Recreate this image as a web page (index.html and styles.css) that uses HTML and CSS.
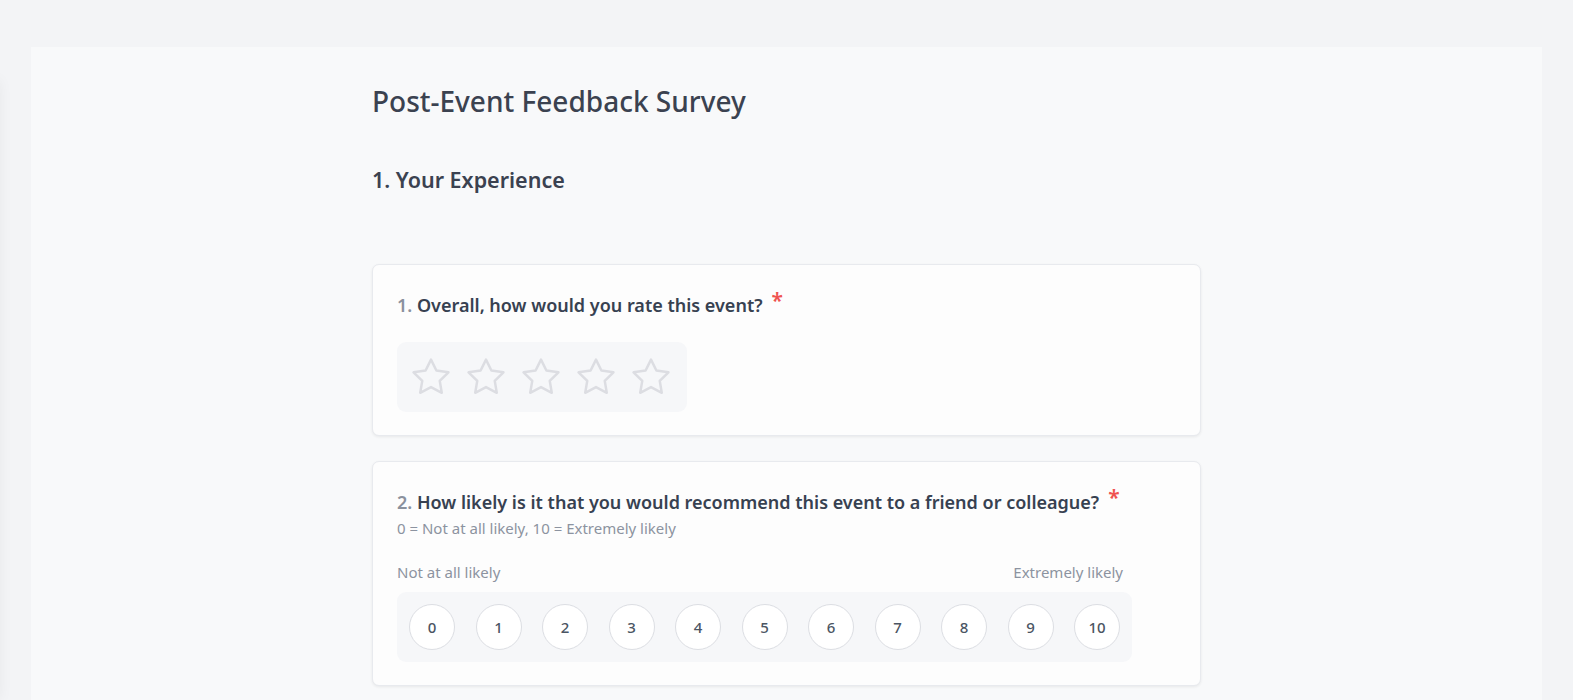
FILE: index.html
```html
<!DOCTYPE html>
<html lang="en">
<head>
<meta charset="utf-8">
<title>Post-Event Feedback Survey</title>
<link rel="stylesheet" href="styles.css">
</head>
<body>
<div class="edge-shadow"></div>
<div class="app">
  <main class="panel">
    <div class="column">
      <h1 class="survey-title">Post-Event Feedback Survey</h1>
      <h2 class="section-title">1. Your Experience</h2>

      <section class="card">
        <div class="question">
          <span class="q-num">1.</span> Overall, how would you rate this event?<span class="req">*</span>
        </div>
        <div class="stars">
          <svg class="star" viewBox="0 0 24 24"><path d="M12 2.5l2.94 5.96 6.58.96-4.76 4.64 1.12 6.55L12 17.52l-5.88 3.09 1.12-6.55-4.76-4.64 6.58-.96z"/></svg>
          <svg class="star" viewBox="0 0 24 24"><path d="M12 2.5l2.94 5.96 6.58.96-4.76 4.64 1.12 6.55L12 17.52l-5.88 3.09 1.12-6.55-4.76-4.64 6.58-.96z"/></svg>
          <svg class="star" viewBox="0 0 24 24"><path d="M12 2.5l2.94 5.96 6.58.96-4.76 4.64 1.12 6.55L12 17.52l-5.88 3.09 1.12-6.55-4.76-4.64 6.58-.96z"/></svg>
          <svg class="star" viewBox="0 0 24 24"><path d="M12 2.5l2.94 5.96 6.58.96-4.76 4.64 1.12 6.55L12 17.52l-5.88 3.09 1.12-6.55-4.76-4.64 6.58-.96z"/></svg>
          <svg class="star" viewBox="0 0 24 24"><path d="M12 2.5l2.94 5.96 6.58.96-4.76 4.64 1.12 6.55L12 17.52l-5.88 3.09 1.12-6.55-4.76-4.64 6.58-.96z"/></svg>
        </div>
      </section>

      <section class="card">
        <div class="question">
          <span class="q-num">2.</span> How likely is it that you would recommend this event to a friend or colleague?<span class="req">*</span>
        </div>
        <div class="hint">0 = Not at all likely, 10 = Extremely likely</div>
        <div class="nps">
          <div class="nps-labels">
            <span>Not at all likely</span>
            <span>Extremely likely</span>
          </div>
          <div class="nps-scale">
            <span class="nps-btn">0</span>
            <span class="nps-btn">1</span>
            <span class="nps-btn">2</span>
            <span class="nps-btn">3</span>
            <span class="nps-btn">4</span>
            <span class="nps-btn">5</span>
            <span class="nps-btn">6</span>
            <span class="nps-btn">7</span>
            <span class="nps-btn">8</span>
            <span class="nps-btn">9</span>
            <span class="nps-btn">10</span>
          </div>
        </div>
      </section>
    </div>
  </main>
</div>
</body>
</html>
```

FILE: styles.css
```css
html {
  background: #ffffff;
}
body {
  margin: 0;
  font-family: "Noto Sans", "Open Sans", "Liberation Sans", sans-serif;
  color: #374151;
  overflow: hidden;
}
.edge-shadow {
  position: fixed;
  left: -30px;
  top: 80px;
  bottom: 0;
  width: 30px;
  box-shadow: 0 0 14px rgba(0, 0, 0, 0.05);
  background: #f3f4f6;
  z-index: 2;
}
.app {
  margin-right: 15px;
  background: #f3f4f6;
  padding: 47px 31px 0;
  min-height: 700px;
  box-sizing: border-box;
}
.panel {
  background: #f8f9fa;
  min-height: 700px;
  padding-top: 32px;
}
.column {
  width: 829px;
  margin: 0 auto;
}
.survey-title {
  margin: 0;
  font-size: 28px;
  font-weight: 500;
  line-height: 44px;
  color: #3b4250;
}
.section-title {
  margin: 41px 0 0;
  font-size: 21.5px;
  font-weight: 600;
  line-height: 32px;
  color: #3b4250;
}
.card {
  margin-top: 68px;
  background: #fdfdfd;
  border: 1px solid #e8eaee;
  border-radius: 7px;
  box-shadow: 0 1px 3px rgba(0, 0, 0, 0.07);
  padding: 26px 24px 23px;
}
.card + .card {
  margin-top: 25px;
}
.question {
  font-size: 18px;
  font-weight: 600;
  line-height: 27px;
  color: #374151;
}
.q-num {
  color: #8b919d;
}
.req {
  color: #ef5350;
  font-size: 21px;
  margin-left: 9px;
  position: relative;
  top: -4px;
}
.stars {
  display: inline-flex;
  gap: 11px;
  margin-top: 23px;
  padding: 13px 14px 13px 12px;
  background: #f6f7f9;
  border-radius: 9px;
}
.star {
  width: 44px;
  height: 44px;
  fill: none;
  stroke: #dcdde2;
  stroke-width: 1.35;
  stroke-linejoin: round;
}
.hint {
  font-size: 15px;
  color: #8c93a0;
  line-height: 22px;
  margin-top: 1px;
}
.nps {
  display: inline-block;
  margin-top: 22px;
}
.nps-labels {
  display: flex;
  justify-content: space-between;
  font-size: 15px;
  color: #8c93a0;
  line-height: 22px;
  padding-right: 9px;
  margin-bottom: 9px;
}
.nps-scale {
  display: flex;
  gap: 20.5px;
  padding: 12px;
  background: #f6f7f9;
  border-radius: 9px;
}
.nps-btn {
  width: 46px;
  height: 46px;
  box-sizing: border-box;
  border: 1px solid #dcdee3;
  border-radius: 50%;
  background: #ffffff;
  display: flex;
  align-items: center;
  justify-content: center;
  font-size: 15px;
  font-weight: 500;
  color: #4b5563;
}
```
